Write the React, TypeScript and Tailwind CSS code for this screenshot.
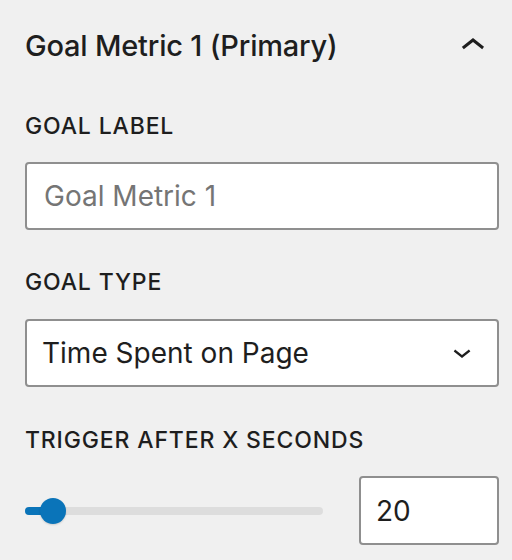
import React, { useState } from 'react';

const font = { fontFamily: 'Inter, "Noto Sans", sans-serif' };

function FieldLabel({ children, className = '' }: { children: React.ReactNode; className?: string }) {
  return (
    <div className={`text-[23px] leading-[32px] font-medium uppercase tracking-[0.85px] text-[#1e1e1e] ${className}`}>
      {children}
    </div>
  );
}

export default function App() {
  const [label, setLabel] = useState('');
  const [seconds, setSeconds] = useState(20);

  return (
    <div className="w-[512px] h-[560px] bg-[#f0f0f0] overflow-hidden text-[#1e1e1e]" style={font}>
      {/* panel header */}
      <div className="flex items-center justify-between pl-[25px] pr-[15px] pt-[22px]">
        <h2 className="text-[29px] leading-[32px] font-medium tracking-[-0.2px]">Goal Metric 1 (Primary)</h2>
        <svg width="48" height="48" viewBox="0 0 24 24" className="fill-[#1e1e1e]">
          <path d="M6.5 12.4L12 8l5.5 4.4-.9 1.2L12 10l-4.6 3.6-1-1.2z" />
        </svg>
      </div>

      <div className="pl-[25px] pr-[13px]">
        <FieldLabel className="mt-[40px]">Goal Label</FieldLabel>
        <input
          value={label}
          onChange={(e) => setLabel(e.target.value)}
          placeholder="Goal Metric 1"
          className="mt-[20px] block w-[474px] h-[68px] px-[17px] bg-white border-2 border-[#8f8f8f] rounded-[4px] text-[28px] text-[#1e1e1e] placeholder:text-[#757575] outline-none"
        />

        <FieldLabel className="mt-[36px]">Goal Type</FieldLabel>
        <div className="relative mt-[21px] w-[474px] h-[68px] bg-white border-2 border-[#8f8f8f] rounded-[4px] flex items-center">
          <span className="pl-[15px] text-[28px]">Time Spent on Page</span>
          <svg width="36" height="36" viewBox="0 0 24 24" className="absolute right-[17px] top-[13px] fill-[#1e1e1e]">
            <path d="M17.5 11.6L12 16l-5.5-4.4.9-1.2L12 14l4.6-3.6 1 1.2z" />
          </svg>
        </div>

        <FieldLabel className="mt-[37px]">Trigger after X seconds</FieldLabel>
        <div className="mt-[20px] flex items-center">
          <div className="relative w-[298px] h-[8px] rounded-full bg-[#dddddd]">
            <div className="absolute left-0 top-0 h-full w-[28px] rounded-full bg-[#0a74b9]" />
            <div className="absolute top-1/2 left-[28px] w-[26px] h-[26px] -translate-x-1/2 -translate-y-1/2 rounded-full bg-[#0a74b9] shadow-[0_1px_2px_rgba(0,0,0,0.15)]" />
          </div>
          <input
            value={seconds}
            onChange={(e) => setSeconds(Number(e.target.value) || 0)}
            className="ml-[36px] w-[140px] h-[69px] px-[15px] bg-white border-2 border-[#8f8f8f] rounded-[4px] text-[28px] text-[#1e1e1e] outline-none"
          />
        </div>
      </div>
    </div>
  );
}
